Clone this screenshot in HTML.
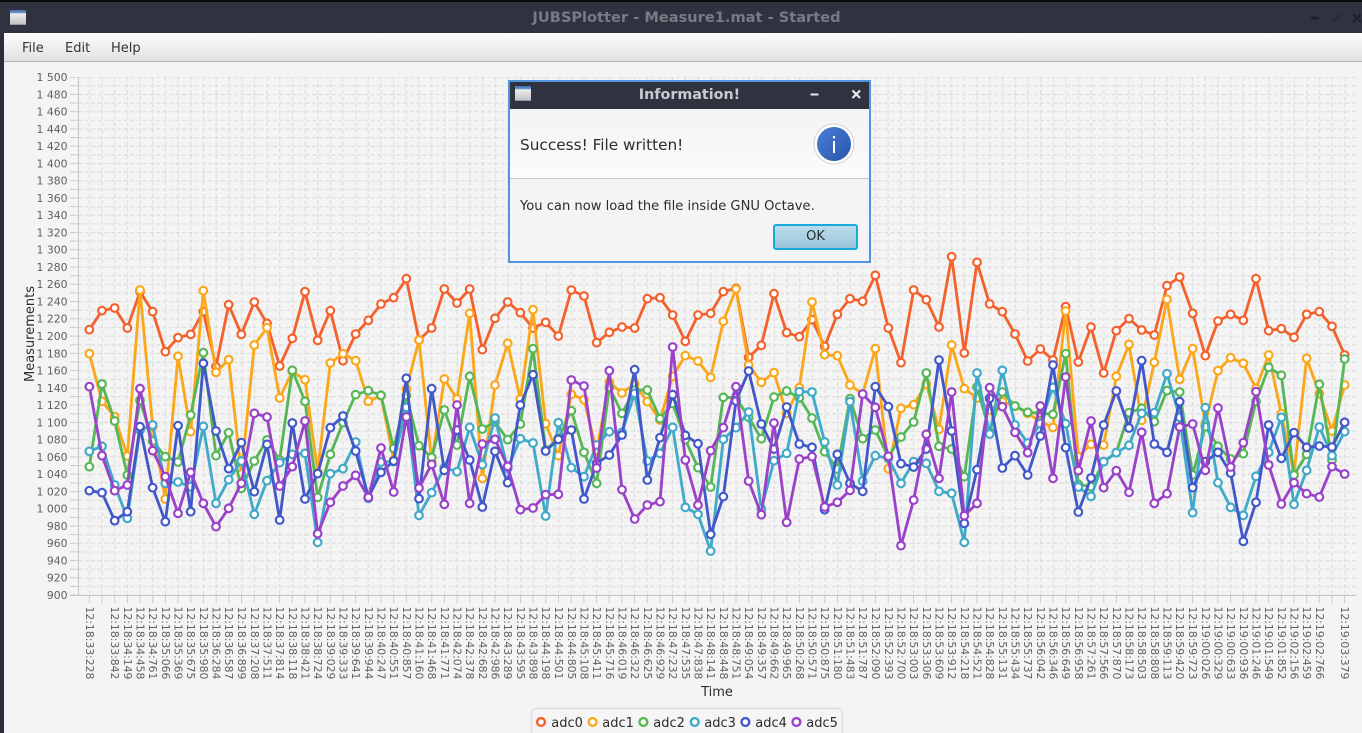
<!DOCTYPE html>
<html lang="en"><head><meta charset="utf-8"><title>JUBSPlotter - Measure1.mat - Started</title>
<style>
html,body{margin:0;padding:0;width:1362px;height:733px;overflow:hidden;background:#f4f4f4;font-family:"DejaVu Sans","Liberation Sans",sans-serif;color:#333}
#chart{position:absolute;left:0;top:0}
.bar{position:absolute;left:0;top:0;width:1362px;height:33px;background:#2f3340;box-sizing:border-box;border-top:2px solid #0c0c0c}
.bar .t{position:absolute;left:11px;right:0;top:7px;text-align:center;font-weight:bold;font-size:14.6px;line-height:18px;color:#777b84}
.left{position:absolute;left:0;top:33px;width:4px;height:700px;background:#2b2e38}
.ic{position:absolute;width:16px;height:15px;background:linear-gradient(#3f6cb0 0,#6f97cb 20%,#eeeeee 24%,#c4c4c4 92%,#5e7fae 100%)}
.menu{position:absolute;left:4px;top:33px;width:1358px;height:29px;box-sizing:border-box;background:linear-gradient(#fcfcfc,#e2e2e2);border-bottom:1px solid #b4b4b4;font-size:13px;line-height:31px}
.menu span{position:absolute;top:0}
.dlg{position:absolute;left:508px;top:80px;width:363px;height:183px;box-sizing:border-box;border:2px solid #5294e2;background:#f4f4f4}
.dt{position:absolute;left:0;top:0;right:0;height:27px;background:#2f3340;color:#c9cbd0;font-weight:bold;font-size:14.3px;line-height:26px;text-align:center}
.hd{position:absolute;left:0;right:0;top:27px;height:69px;background:linear-gradient(#f3f3f3,#fbfbfb);border-bottom:1px solid #c8c8c8}
.s{position:absolute;left:10px;top:54px;font-size:15.3px;line-height:18px;white-space:nowrap;color:#2c2c2c}
.m{position:absolute;left:10px;top:116px;font-size:13.1px;line-height:17px;white-space:nowrap;color:#2c2c2c}
.ok{position:absolute;left:263px;top:142px;width:85px;height:26px;box-sizing:border-box;border:2px solid #19a9d9;border-radius:3px;background:linear-gradient(#bcdcec,#98c5da);text-align:center;font-size:13px;line-height:22px;color:#2c2c2c}
</style></head><body>
<svg id="chart" width="1362" height="733" viewBox="0 0 1362 733" xmlns="http://www.w3.org/2000/svg">
<defs>
<pattern id="gh" patternUnits="userSpaceOnUse" x="78" y="76.6" width="6.5" height="8.633"><rect x="0" y="0" width="4" height="1.2" fill="#dedede"/></pattern>
<pattern id="gv" patternUnits="userSpaceOnUse" x="88.85" y="77" width="12.68" height="6.5"><rect x="0" y="0" width="1.2" height="4" fill="#dedede"/></pattern>
<pattern id="ty" patternUnits="userSpaceOnUse" x="70" y="76.6" width="8" height="8.633"><rect x="0" y="0" width="8" height="1" fill="#cbcbcb"/></pattern>
<pattern id="tx" patternUnits="userSpaceOnUse" x="88.85" y="595" width="12.68" height="8"><rect x="0" y="0" width="1" height="8" fill="#cbcbcb"/></pattern>
<marker id="m0" markerUnits="userSpaceOnUse" markerWidth="40" markerHeight="40" refX="20" refY="20"><circle cx="20" cy="20" r="11.5" fill="#fff" stroke="#f3622d" stroke-width="6.5"/></marker>
<marker id="m1" markerUnits="userSpaceOnUse" markerWidth="40" markerHeight="40" refX="20" refY="20"><circle cx="20" cy="20" r="11.5" fill="#fff" stroke="#fba71b" stroke-width="6.5"/></marker>
<marker id="m2" markerUnits="userSpaceOnUse" markerWidth="40" markerHeight="40" refX="20" refY="20"><circle cx="20" cy="20" r="11.5" fill="#fff" stroke="#57b757" stroke-width="6.5"/></marker>
<marker id="m3" markerUnits="userSpaceOnUse" markerWidth="40" markerHeight="40" refX="20" refY="20"><circle cx="20" cy="20" r="11.5" fill="#fff" stroke="#41a9c9" stroke-width="6.5"/></marker>
<marker id="m4" markerUnits="userSpaceOnUse" markerWidth="40" markerHeight="40" refX="20" refY="20"><circle cx="20" cy="20" r="11.5" fill="#fff" stroke="#4258c9" stroke-width="6.5"/></marker>
<marker id="m5" markerUnits="userSpaceOnUse" markerWidth="40" markerHeight="40" refX="20" refY="20"><circle cx="20" cy="20" r="11.5" fill="#fff" stroke="#9a42c8" stroke-width="6.5"/></marker>
</defs>
<rect x="78" y="77" width="1278" height="518" fill="url(#gh)"/>
<rect x="88" y="77" width="1268" height="518" fill="url(#gv)"/>
<rect x="70" y="77" width="8" height="519" fill="url(#ty)"/>
<rect x="88" y="595" width="1258" height="8" fill="url(#tx)"/>
<rect x="78" y="77" width="1" height="519" fill="#c6c6c6"/>
<rect x="70" y="595" width="1286" height="1" fill="#c6c6c6"/>

<g font-size="10.83" fill="#5f5f5f" text-anchor="end" font-family="'DejaVu Sans',sans-serif">
<text x="67.5" y="81">1 500</text><text x="67.5" y="98.3">1 480</text><text x="67.5" y="115.5">1 460</text><text x="67.5" y="132.8">1 440</text><text x="67.5" y="150.1">1 420</text><text x="67.5" y="167.3">1 400</text><text x="67.5" y="184.6">1 380</text><text x="67.5" y="201.9">1 360</text><text x="67.5" y="219.1">1 340</text><text x="67.5" y="236.4">1 320</text><text x="67.5" y="253.7">1 300</text><text x="67.5" y="270.9">1 280</text><text x="67.5" y="288.2">1 260</text><text x="67.5" y="305.5">1 240</text><text x="67.5" y="322.7">1 220</text><text x="67.5" y="340">1 200</text><text x="67.5" y="357.3">1 180</text><text x="67.5" y="374.5">1 160</text><text x="67.5" y="391.8">1 140</text><text x="67.5" y="409.1">1 120</text><text x="67.5" y="426.3">1 100</text><text x="67.5" y="443.6">1 080</text><text x="67.5" y="460.9">1 060</text><text x="67.5" y="478.1">1 040</text><text x="67.5" y="495.4">1 020</text><text x="67.5" y="512.7">1 000</text><text x="67.5" y="529.9">980</text><text x="67.5" y="547.2">960</text><text x="67.5" y="564.5">940</text><text x="67.5" y="581.7">920</text><text x="67.5" y="599">900</text>
</g>

<g transform="translate(76.55,606.5) rotate(90) scale(.33333)" font-size="32.5" fill="#5f5f5f" font-family="'DejaVu Sans',sans-serif">
<text y="-28">12:18:33:228</text><text y="-104">12:18:33:842</text><text y="-142">12:18:34:149</text><text y="-180">12:18:34:458</text><text y="-218">12:18:34:761</text><text y="-256">12:18:35:066</text><text y="-294">12:18:35:369</text><text y="-332">12:18:35:675</text><text y="-370">12:18:35:980</text><text y="-408">12:18:36:284</text><text y="-446">12:18:36:587</text><text y="-484">12:18:36:899</text><text y="-523">12:18:37:208</text><text y="-561">12:18:37:511</text><text y="-599">12:18:37:814</text><text y="-637">12:18:38:118</text><text y="-675">12:18:38:421</text><text y="-713">12:18:38:724</text><text y="-751">12:18:39:029</text><text y="-789">12:18:39:333</text><text y="-827">12:18:39:641</text><text y="-865">12:18:39:944</text><text y="-903">12:18:40:247</text><text y="-941">12:18:40:551</text><text y="-979">12:18:40:857</text><text y="-1017">12:18:41:160</text><text y="-1055">12:18:41:468</text><text y="-1093">12:18:41:771</text><text y="-1131">12:18:42:074</text><text y="-1169">12:18:42:378</text><text y="-1207">12:18:42:682</text><text y="-1245">12:18:42:986</text><text y="-1283">12:18:43:289</text><text y="-1321">12:18:43:595</text><text y="-1359">12:18:43:898</text><text y="-1397">12:18:44:198</text><text y="-1435">12:18:44:501</text><text y="-1474">12:18:44:805</text><text y="-1512">12:18:45:108</text><text y="-1550">12:18:45:411</text><text y="-1588">12:18:45:716</text><text y="-1626">12:18:46:019</text><text y="-1664">12:18:46:322</text><text y="-1702">12:18:46:625</text><text y="-1740">12:18:46:929</text><text y="-1778">12:18:47:232</text><text y="-1816">12:18:47:535</text><text y="-1854">12:18:47:838</text><text y="-1892">12:18:48:141</text><text y="-1930">12:18:48:448</text><text y="-1968">12:18:48:751</text><text y="-2006">12:18:49:054</text><text y="-2044">12:18:49:357</text><text y="-2082">12:18:49:662</text><text y="-2120">12:18:49:965</text><text y="-2158">12:18:50:268</text><text y="-2196">12:18:50:571</text><text y="-2234">12:18:50:875</text><text y="-2272">12:18:51:180</text><text y="-2310">12:18:51:483</text><text y="-2348">12:18:51:787</text><text y="-2386">12:18:52:090</text><text y="-2425">12:18:52:393</text><text y="-2463">12:18:52:700</text><text y="-2501">12:18:53:003</text><text y="-2539">12:18:53:306</text><text y="-2577">12:18:53:609</text><text y="-2615">12:18:53:912</text><text y="-2653">12:18:54:218</text><text y="-2691">12:18:54:521</text><text y="-2729">12:18:54:828</text><text y="-2767">12:18:55:131</text><text y="-2805">12:18:55:434</text><text y="-2843">12:18:55:737</text><text y="-2881">12:18:56:042</text><text y="-2919">12:18:56:346</text><text y="-2957">12:18:56:649</text><text y="-2995">12:18:56:958</text><text y="-3033">12:18:57:261</text><text y="-3071">12:18:57:566</text><text y="-3109">12:18:57:870</text><text y="-3147">12:18:58:173</text><text y="-3185">12:18:58:503</text><text y="-3223">12:18:58:808</text><text y="-3261">12:18:59:113</text><text y="-3299">12:18:59:420</text><text y="-3338">12:18:59:723</text><text y="-3376">12:19:00:026</text><text y="-3414">12:19:00:329</text><text y="-3452">12:19:00:633</text><text y="-3490">12:19:00:936</text><text y="-3528">12:19:01:246</text><text y="-3566">12:19:01:549</text><text y="-3604">12:19:01:852</text><text y="-3642">12:19:02:156</text><text y="-3680">12:19:02:459</text><text y="-3718">12:19:02:766</text><text y="-3794">12:19:03:379</text>
</g>

<text transform="translate(34,334) rotate(-90)" text-anchor="middle" font-size="13" fill="#2c2c2c" font-family="'DejaVu Sans',sans-serif">Measurements</text>
<text x="717" y="696" text-anchor="middle" font-size="13" fill="#2c2c2c" font-family="'DejaVu Sans',sans-serif">Time</text>

<g transform="translate(80,245) scale(.33333)" fill="none" stroke-width="8.5" stroke-linejoin="round">
<polyline stroke="#f3622d" marker-start="url(#m0)" marker-mid="url(#m0)" marker-end="url(#m0)" points="28,254 66,197 104,189 142,249 180,140 218,200 256,320 294,278 332,268 370,200 408,365 446,179 484,268 523,171 561,235 599,363 637,280 675,140 713,286 751,197 789,347 827,267 865,226 903,177 941,158 979,101 1017,285 1055,249 1093,132 1131,174 1169,132 1207,314 1245,220 1283,171 1321,203 1359,249 1397,232 1435,273 1474,135 1512,153 1550,293 1588,262 1626,246 1664,249 1702,161 1740,158 1778,210 1816,289 1854,210 1892,205 1930,140 1968,130 2006,337 2044,301 2082,146 2120,263 2158,275 2196,224 2234,304 2272,208 2310,161 2348,169 2386,91 2425,249 2463,353 2501,135 2539,164 2577,246 2615,35 2653,324 2691,52 2729,177 2767,200 2805,267 2843,348 2881,312 2919,345 2957,185 2995,351 3033,246 3071,384 3109,257 3147,221 3185,255 3223,270 3261,122 3299,96 3338,205 3376,332 3414,228 3452,208 3490,226 3528,101 3566,257 3604,251 3642,277 3680,208 3718,200 3756,244 3794,330"/>
<polyline stroke="#fba71b" marker-start="url(#m1)" marker-mid="url(#m1)" marker-end="url(#m1)" points="28,326 66,469 104,515 142,633 180,135 218,545 256,762 294,334 332,560 370,137 408,382 446,344 484,687 523,300 561,248 599,459 637,380 675,404 713,680 751,354 789,326 827,347 865,469 903,452 941,645 979,432 1017,285 1055,648 1093,402 1131,462 1169,205 1207,700 1245,420 1283,295 1321,462 1359,194 1397,536 1435,632 1474,448 1512,464 1550,617 1588,412 1626,444 1664,417 1702,470 1740,525 1778,394 1816,332 1854,348 1892,397 1930,229 1968,132 2006,360 2044,412 2082,383 2120,505 2158,428 2196,171 2234,329 2272,332 2310,420 2348,447 2386,311 2425,671 2463,490 2501,479 2539,417 2577,553 2615,300 2653,431 2691,459 2729,495 2767,470 2805,483 2843,505 2881,530 2919,547 2957,198 2995,635 3033,598 3071,600 3109,394 3147,298 3185,526 3223,352 3261,163 3299,403 3338,311 3376,535 3414,377 3452,338 3490,355 3528,430 3566,330 3604,506 3642,687 3680,340 3718,446 3756,558 3794,420"/>
<polyline stroke="#57b757" marker-start="url(#m2)" marker-mid="url(#m2)" marker-end="url(#m2)" points="28,665 66,417 104,528 142,690 180,466 218,588 256,635 294,651 332,510 370,323 408,632 446,563 484,730 523,648 561,585 599,645 637,376 675,469 713,757 751,628 789,533 827,449 865,437 903,451 941,610 979,451 1017,602 1055,637 1093,495 1131,600 1169,394 1207,552 1245,531 1283,584 1321,537 1359,311 1397,615 1435,580 1474,497 1512,622 1550,715 1588,427 1626,505 1664,435 1702,435 1740,521 1778,475 1816,584 1854,668 1892,726 1930,457 1968,458 2006,517 2044,581 2082,456 2120,438 2158,458 2196,519 2234,620 2272,672 2310,461 2348,581 2386,555 2425,636 2463,576 2501,531 2539,384 2577,604 2615,612 2653,695 2691,426 2729,560 2767,441 2805,483 2843,502 2881,505 2919,508 2957,326 2995,718 3033,725 3071,650 3109,623 3147,503 3185,490 3223,530 3261,437 3299,441 3338,690 3376,545 3414,604 3452,642 3490,626 3528,469 3566,367 3604,391 3642,690 3680,628 3718,418 3756,645 3794,342"/>
<polyline stroke="#41a9c9" marker-start="url(#m3)" marker-mid="url(#m3)" marker-end="url(#m3)" points="28,619 66,604 104,720 142,820 180,555 218,540 256,715 294,711 332,725 370,544 408,775 446,704 484,648 523,808 561,707 599,653 637,628 675,625 713,892 751,686 789,671 827,591 865,760 903,651 941,650 979,487 1017,811 1055,743 1093,668 1131,680 1169,547 1207,659 1245,519 1283,670 1321,581 1359,594 1397,813 1435,533 1474,668 1512,695 1550,600 1588,560 1626,562 1664,445 1702,648 1740,625 1778,547 1816,787 1854,808 1892,918 1930,583 1968,548 2006,501 2044,792 2082,647 2120,625 2158,440 2196,441 2234,591 2272,720 2310,470 2348,708 2386,632 2425,640 2463,715 2501,650 2539,655 2577,739 2615,745 2653,892 2691,384 2729,567 2767,376 2805,540 2843,594 2881,536 2919,427 2957,536 2995,726 3033,754 3071,650 3109,623 3147,601 3185,505 3223,503 3261,386 3299,517 3338,803 3376,488 3414,713 3452,787 3490,811 3528,694 3566,622 3604,517 3642,778 3680,676 3718,546 3756,632 3794,560"/>
<polyline stroke="#4258c9" marker-start="url(#m4)" marker-mid="url(#m4)" marker-end="url(#m4)" points="28,737 66,743 104,827 142,800 180,545 218,728 256,830 294,542 332,800 370,355 408,558 446,671 484,593 523,740 561,598 599,825 637,534 675,762 713,686 751,548 789,513 827,618 865,757 903,682 941,648 979,400 1017,761 1055,431 1093,676 1131,555 1169,645 1207,786 1245,619 1283,713 1321,480 1359,389 1397,618 1435,583 1474,555 1512,762 1550,655 1588,630 1626,570 1664,374 1702,705 1740,578 1778,449 1816,571 1854,596 1892,868 1930,755 1968,468 2006,378 2044,537 2082,612 2120,486 2158,597 2196,607 2234,794 2272,628 2310,715 2348,739 2386,425 2425,485 2463,656 2501,666 2539,612 2577,345 2615,558 2653,835 2691,674 2729,460 2767,669 2805,632 2843,690 2881,573 2919,360 2957,608 2995,801 3033,699 3071,540 3109,438 3147,549 3185,347 3223,597 3261,622 3299,470 3338,728 3376,650 3414,622 3452,684 3490,889 3528,772 3566,540 3604,640 3642,563 3680,607 3718,603 3756,606 3794,532"/>
<polyline stroke="#9a42c8" marker-start="url(#m5)" marker-mid="url(#m5)" marker-end="url(#m5)" points="28,425 66,632 104,737 142,720 180,431 218,617 256,695 294,805 332,682 370,775 408,845 446,790 484,715 523,505 561,516 599,723 637,665 675,528 713,866 751,772 789,723 827,691 865,757 903,609 941,741 979,516 1017,729 1055,658 1093,778 1131,480 1169,775 1207,597 1245,583 1283,664 1321,794 1359,789 1397,749 1435,748 1474,405 1512,423 1550,669 1588,377 1626,734 1664,822 1702,780 1740,770 1778,306 1816,645 1854,780 1892,617 1930,548 1968,425 2006,708 2044,809 2082,534 2120,832 2158,642 2196,635 2234,786 2272,772 2310,736 2348,447 2386,487 2425,634 2463,902 2501,765 2539,568 2577,700 2615,441 2653,812 2691,775 2729,428 2767,485 2805,562 2843,623 2881,483 2919,700 2957,396 2995,677 3033,528 3071,728 3109,677 3147,742 3185,562 3223,775 3261,746 3299,546 3338,537 3376,676 3414,489 3452,666 3490,593 3528,440 3566,660 3604,777 3642,713 3680,746 3718,756 3756,665 3794,687"/>
</g>

<rect x="531.5" y="708.5" width="311" height="40" rx="5" fill="#f5f5f5" stroke="#dedede" stroke-width="1.6"/>
<g fill="#fff" stroke-width="2.4">
<circle cx="541" cy="722" r="3.9" stroke="#f3622d"/><circle cx="592.6" cy="722" r="3.9" stroke="#fba71b"/><circle cx="643.4" cy="722" r="3.9" stroke="#57b757"/><circle cx="694.7" cy="722" r="3.9" stroke="#41a9c9"/><circle cx="745.4" cy="722" r="3.9" stroke="#4258c9"/><circle cx="796.4" cy="722" r="3.9" stroke="#9a42c8"/>
</g>
<g font-size="13" fill="#2c2c2c" font-family="'DejaVu Sans',sans-serif">
<text x="551.3" y="727">adc0</text><text x="602.3" y="727">adc1</text><text x="653.3" y="727">adc2</text><text x="704.3" y="727">adc3</text><text x="755.3" y="727">adc4</text><text x="806.3" y="727">adc5</text>
</g>
</svg>

<div class="bar"><div class="t">JUBSPlotter - Measure1.mat - Started</div>
<div class="ic" style="left:10px;top:8px"></div>
<svg style="position:absolute;left:1300px;top:0" width="62" height="31" fill="none" stroke="#1d2027" stroke-width="2.2"><path d="M11 16h8"/><path d="M32 20l8-8" stroke-width="1.6" stroke="#262932"/><path d="M53 12l8 8M61 12l-8 8"/></svg>
</div>
<div class="left"></div>
<div class="menu"><span style="left:18px">File</span><span style="left:61px">Edit</span><span style="left:107px">Help</span></div>

<div class="dlg">
<div class="dt">Information!</div>
<div class="ic" style="left:5px;top:4px"></div>
<svg style="position:absolute;left:295px;top:0" width="60" height="27" fill="none" stroke="#e8e8ea" stroke-width="2"><path d="M5.5 12.500h8"/><path d="M27 16l7-7" stroke="#363a45" stroke-width="1.6"/><path d="M47.500 8.500l7.500 7.500M55 8.500l-7.500 7.500" stroke-width="2.200"/></svg>
<div class="hd"></div>
<div class="s">Success! File written!</div>
<svg style="position:absolute;left:303px;top:41px" width="42" height="42"><defs><linearGradient id="ib" x1="0" y1="0" x2="1" y2="1"><stop offset="0" stop-color="#4a7fd4"/><stop offset="1" stop-color="#2a55ab"/></linearGradient></defs><circle cx="21" cy="21" r="20" fill="#fff" stroke="#d2d2d2" stroke-width="1"/><circle cx="21" cy="21" r="17" fill="url(#ib)"/><rect x="20" y="18" width="2" height="12" fill="#fff"/><rect x="20" y="13" width="2" height="2.400" fill="#fff"/></svg>
<div class="m">You can now load the file inside GNU Octave.</div>
<div class="ok">OK</div>
</div>
</body></html>
